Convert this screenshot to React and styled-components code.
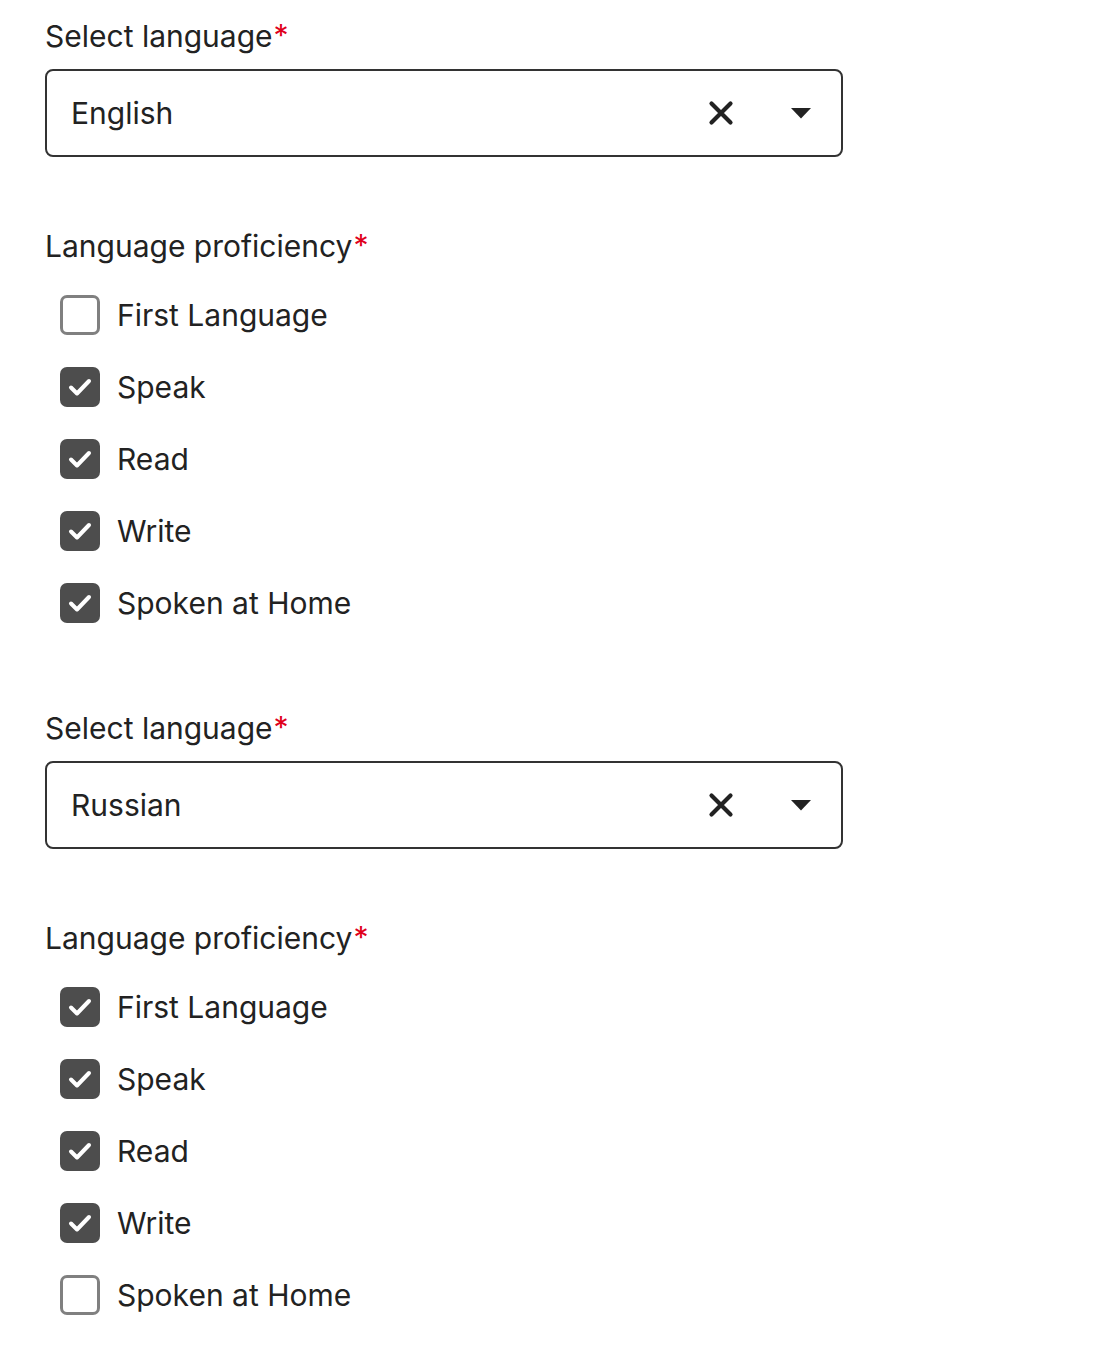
import React, { useState } from 'react'
import styled, { createGlobalStyle } from 'styled-components'

const Global = createGlobalStyle`
  body {
    margin: 0;
    background: #fff;
    font-family: Inter, "Open Sans", sans-serif;
    color: #222;
  }
`

const initial = [
  {
    language: 'English',
    skills: { first: false, speak: true, read: true, write: true, home: true },
  },
  {
    language: 'Russian',
    skills: { first: true, speak: true, read: true, write: true, home: false },
  },
]

const options = [
  { key: 'first', label: 'First Language' },
  { key: 'speak', label: 'Speak' },
  { key: 'read', label: 'Read' },
  { key: 'write', label: 'Write' },
  { key: 'home', label: 'Spoken at Home' },
]

function App() {
  const [entries, setEntries] = useState(initial)

  const toggle = (i, key) => {
    setEntries(entries.map((e, n) =>
      n === i ? { ...e, skills: { ...e.skills, [key]: !e.skills[key] } } : e
    ))
  }

  return (
    <Page>
      <Global />
      {entries.map((entry, i) => (
        <Section key={i}>
          <Label>Select language<Req>*</Req></Label>
          <Select>
            <Value>{entry.language}</Value>
            <Clear aria-label="clear">
              <svg width="26" height="26" viewBox="0 0 26 26">
                <path d="M3.5 3.5 L22.5 22.5 M22.5 3.5 L3.5 22.5" stroke="#222" strokeWidth="4.2" strokeLinecap="round" />
              </svg>
            </Clear>
            <Caret>
              <svg width="20" height="11" viewBox="0 0 20 11">
                <path d="M0 0 H20 L10 10.5 Z" fill="#222" />
              </svg>
            </Caret>
          </Select>
          <Label top>Language proficiency<Req>*</Req></Label>
          <List>
            {options.map(o => (
              <Row key={o.key} onClick={() => toggle(i, o.key)}>
                <Box checked={entry.skills[o.key]}>
                  {entry.skills[o.key] && (
                    <svg width="40" height="40" viewBox="0 0 40 40">
                      <path d="M11 20.5 L17 26.5 L29 14" fill="none" stroke="#fff" strokeWidth="4" strokeLinecap="round" strokeLinejoin="round" />
                    </svg>
                  )}
                </Box>
                <RowText>{o.label}</RowText>
              </Row>
            ))}
          </List>
        </Section>
      ))}
    </Page>
  )
}

export default App

const Page = styled.div`
  padding: 18px 0 0 45px;
  width: 798px;
`

const Section = styled.div`
  display: flex;
  flex-direction: column;
  margin-bottom: 71px;
`

const Label = styled.div`
  font-size: 30px;
  line-height: 36px;
  color: #222;
  margin-top: ${props => props.top ? '71px' : '0'};
  margin-bottom: 15px;
`

const Req = styled.span`
  color: #e0001b;
  position: relative;
  top: -1px;
  margin-left: 1px;
`

const Select = styled.div`
  box-sizing: border-box;
  height: 88px;
  border: 2px solid #333;
  border-radius: 8px;
  display: flex;
  align-items: center;
  padding: 0 30px 0 24px;
`

const Value = styled.div`
  flex: 1;
  font-size: 30px;
  color: #222;
`

const Clear = styled.div`
  display: flex;
  align-items: center;
  margin-right: 57px;
`

const Caret = styled.div`
  display: flex;
  align-items: center;
`

const List = styled.div`
  display: flex;
  flex-direction: column;
`

const Row = styled.div`
  height: 72px;
  display: flex;
  align-items: center;
  padding-left: 15px;
  cursor: pointer;
`

const Box = styled.div`
  box-sizing: border-box;
  width: 40px;
  height: 40px;
  border-radius: 7px;
  border: ${props => props.checked ? 'none' : '3px solid #808080'};
  background: ${props => props.checked ? '#4d4d4d' : '#fff'};
  display: flex;
  align-items: center;
  justify-content: center;
  margin-right: 17px;
`

const RowText = styled.div`
  font-size: 30px;
  color: #222;
`
